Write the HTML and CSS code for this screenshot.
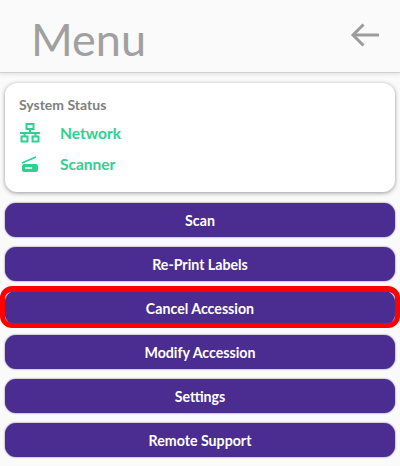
FILE: index.html
```html
<!DOCTYPE html>
<html lang="en">
<head>
    <meta charset="UTF-8">
    <meta name="viewport" content="width=device-width, initial-scale=1.0">
    <title>Menu</title>
    <link rel="stylesheet" href="styles.css">
</head>
<body>
    <header class="top-bar">
        <h1>Menu</h1>
        <svg class="back-icon" width="30" height="24" viewBox="0 0 30 24" fill="none" stroke="#9c9c9c" stroke-width="3">
            <path d="M29 12H3"/>
            <path d="M13.500 1.500 3 12l10.500 10.500"/>
        </svg>
    </header>

    <main class="content">
        <section class="status-card">
            <h2>System Status</h2>
            <div class="status-row">
                <svg class="status-icon" width="22" height="20" viewBox="0 0 22 20" fill="none" stroke="#2fd191" stroke-width="2">
                    <rect x="7.500" y="1" width="7" height="5"/>
                    <path d="M11 6v4M1 10h20"/>
                    <rect x="2.500" y="13.500" width="6" height="5"/>
                    <rect x="13.500" y="13.500" width="6" height="5"/>
                    <path d="M5.500 10v3.500M16.500 10v3.500"/>
                </svg>
                <span>Network</span>
            </div>
            <div class="status-row">
                <svg class="status-icon" width="22" height="20" viewBox="0 0 22 20" fill="none">
                    <path d="M3 9 17 3" stroke="#2fd191" stroke-width="1.800"/>
                    <path d="M5 10h12c1 0 2 1 2 2v4c0 1-1 2-2 2H5c-1 0-2-1-2-2v-4c0-1 1-2 2-2z" fill="#2fd191"/>
                    <path d="M6 14h7" stroke="#fff" stroke-width="1.600"/>
                </svg>
                <span>Scanner</span>
            </div>
        </section>

        <button class="menu-button">Scan</button>
        <button class="menu-button">Re-Print Labels</button>
        <button class="menu-button selected">Cancel Accession</button>
        <button class="menu-button">Modify Accession</button>
        <button class="menu-button">Settings</button>
        <button class="menu-button">Remote Support</button>
    </main>
</body>
</html>
```

FILE: styles.css
```css
* {
    margin: 0;
    padding: 0;
    box-sizing: border-box;
}

body {
    width: 400px;
    height: 466px;
    overflow: hidden;
    background-color: #fafafa;
    font-family: "Lato", "Noto Sans", Arial, sans-serif;
}

.top-bar {
    display: flex;
    justify-content: space-between;
    align-items: center;
    height: 73px;
    padding: 0 20px 0 31px;
    border-bottom: 1px solid #d0d0d0;
    box-shadow: 0 2px 3px rgba(0,0,0,0.08);
}

.top-bar h1 {
    padding-top: 6px;
    font-size: 45px;
    font-weight: 400;
    line-height: 67px;
    color: #a0a0a0;
}

.back-icon {
    margin-bottom: 2px;
}

.content {
    display: flex;
    flex-direction: column;
    padding: 10px 5px 0;
}

.status-card {
    height: 109px;
    margin-bottom: 11px;
    padding: 13px 14px 0;
    background: white;
    border-radius: 12px;
    box-shadow: 0 1px 4px rgba(0,0,0,0.4);
}

.status-card h2 {
    margin-bottom: 3px;
    font-size: 14px;
    font-weight: 700;
    line-height: 18px;
    color: #808080;
}

.status-row {
    display: flex;
    align-items: center;
    height: 31px;
    font-size: 15.500px;
    font-weight: 700;
    color: #2fd191;
}

.status-icon {
    margin-right: 19px;
    flex-shrink: 0;
}

.menu-button {
    position: relative;
    height: 34px;
    margin-bottom: 10px;
    background: #4b2d91;
    color: white;
    border: none;
    border-radius: 11px;
    box-shadow: 0 0 2px rgba(40,20,90,0.7);
    font-family: inherit;
    font-size: 14.200px;
    font-weight: 700;
}

/* red highlight sits over the button edge */
.menu-button.selected::after {
    content: '';
    position: absolute;
    top: -5px;
    right: -5px;
    bottom: -3px;
    left: -5px;
    border: 5px solid #ff0000;
    border-top-width: 6px;
    border-radius: 12px;
}
```
